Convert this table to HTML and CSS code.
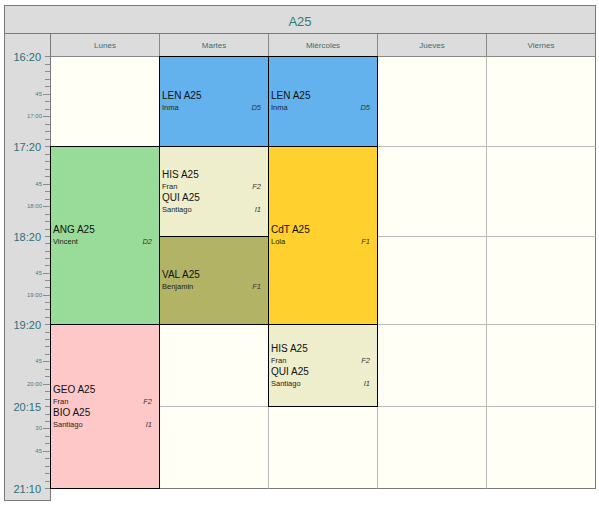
FILE: index.html
```html
<!DOCTYPE html>
<html lang="es">
<head>
<meta charset="utf-8">
<title>A25</title>
<link rel="stylesheet" href="styles.css">
</head>
<body>
<div class="cal">
  <div class="title">A25</div>
  <div class="body">
    <div class="timecol">
      <div class="mark big" style="top:22px"><span>16:20</span></div>
      <div class="mark" style="top:29.5px"></div>
      <div class="mark" style="top:37px"></div>
      <div class="mark" style="top:44.5px"></div>
      <div class="mark" style="top:52px"></div>
      <div class="mark sm" style="top:59.5px"><span>45</span></div>
      <div class="mark" style="top:67px"></div>
      <div class="mark" style="top:74.5px"></div>
      <div class="mark sm" style="top:82px"><span>17:00</span></div>
      <div class="mark" style="top:89.5px"></div>
      <div class="mark" style="top:97px"></div>
      <div class="mark" style="top:104.5px"></div>
      <div class="mark big" style="top:112px"><span>17:20</span></div>
      <div class="mark" style="top:119.5px"></div>
      <div class="mark" style="top:127px"></div>
      <div class="mark" style="top:134.5px"></div>
      <div class="mark" style="top:142px"></div>
      <div class="mark sm" style="top:149.5px"><span>45</span></div>
      <div class="mark" style="top:157px"></div>
      <div class="mark" style="top:164.5px"></div>
      <div class="mark sm" style="top:172px"><span>18:00</span></div>
      <div class="mark" style="top:179.5px"></div>
      <div class="mark" style="top:187px"></div>
      <div class="mark" style="top:194.5px"></div>
      <div class="mark big" style="top:202px"><span>18:20</span></div>
      <div class="mark" style="top:209.3px"></div>
      <div class="mark" style="top:216.7px"></div>
      <div class="mark" style="top:224px"></div>
      <div class="mark" style="top:231.3px"></div>
      <div class="mark sm" style="top:238.7px"><span>45</span></div>
      <div class="mark" style="top:246px"></div>
      <div class="mark" style="top:253.3px"></div>
      <div class="mark sm" style="top:260.7px"><span>19:00</span></div>
      <div class="mark" style="top:268px"></div>
      <div class="mark" style="top:275.3px"></div>
      <div class="mark" style="top:282.7px"></div>
      <div class="mark big" style="top:290px"><span>19:20</span></div>
      <div class="mark" style="top:297.5px"></div>
      <div class="mark" style="top:304.9px"></div>
      <div class="mark" style="top:312.4px"></div>
      <div class="mark" style="top:319.8px"></div>
      <div class="mark sm" style="top:327.3px"><span>45</span></div>
      <div class="mark" style="top:334.7px"></div>
      <div class="mark" style="top:342.2px"></div>
      <div class="mark sm" style="top:349.6px"><span>20:00</span></div>
      <div class="mark" style="top:357.1px"></div>
      <div class="mark" style="top:364.5px"></div>
      <div class="mark big" style="top:372px"><span>20:15</span></div>
      <div class="mark" style="top:379.5px"></div>
      <div class="mark" style="top:386.9px"></div>
      <div class="mark sm" style="top:394.4px"><span>30</span></div>
      <div class="mark" style="top:401.8px"></div>
      <div class="mark" style="top:409.3px"></div>
      <div class="mark sm" style="top:416.7px"><span>45</span></div>
      <div class="mark" style="top:424.2px"></div>
      <div class="mark" style="top:431.6px"></div>
      <div class="mark" style="top:439.1px"></div>
      <div class="mark" style="top:446.5px"></div>
      <div class="mark big" style="top:454px"><span>21:10</span></div>
    </div>
    <div class="main">
      <div class="days">
        <div class="day">Lunes</div>
        <div class="day">Martes</div>
        <div class="day">Miércoles</div>
        <div class="day">Jueves</div>
        <div class="day last">Viernes</div>
      </div>
      <div class="grid">
        <!-- Lunes -->
        <div class="cell"></div>
        <div class="cell ev green span2">
          <div class="subj"><div class="name">ANG A25</div><div class="meta"><span>Vincent</span><i>D2</i></div></div>
        </div>
        <div class="cell ev pink span2">
          <div class="subj"><div class="name">GEO A25</div><div class="meta"><span>Fran</span><i>F2</i></div></div>
          <div class="subj"><div class="name">BIO A25</div><div class="meta"><span>Santiago</span><i>I1</i></div></div>
        </div>
        <!-- Martes -->
        <div class="cell ev blue">
          <div class="subj"><div class="name">LEN A25</div><div class="meta"><span>Inma</span><i>D5</i></div></div>
        </div>
        <div class="cell ev cream">
          <div class="subj"><div class="name">HIS A25</div><div class="meta"><span>Fran</span><i>F2</i></div></div>
          <div class="subj"><div class="name">QUI A25</div><div class="meta"><span>Santiago</span><i>I1</i></div></div>
        </div>
        <div class="cell ev olive">
          <div class="subj"><div class="name">VAL A25</div><div class="meta"><span>Benjamin</span><i>F1</i></div></div>
        </div>
        <div class="cell"></div>
        <div class="cell bottom"></div>
        <!-- Miércoles -->
        <div class="cell ev blue">
          <div class="subj"><div class="name">LEN A25</div><div class="meta"><span>Inma</span><i>D5</i></div></div>
        </div>
        <div class="cell ev yellow span2">
          <div class="subj"><div class="name">CdT A25</div><div class="meta"><span>Lola</span><i>F1</i></div></div>
        </div>
        <div class="cell ev cream">
          <div class="subj"><div class="name">HIS A25</div><div class="meta"><span>Fran</span><i>F2</i></div></div>
          <div class="subj"><div class="name">QUI A25</div><div class="meta"><span>Santiago</span><i>I1</i></div></div>
        </div>
        <div class="cell bottom"></div>
        <!-- Jueves -->
        <div class="cell"></div>
        <div class="cell"></div>
        <div class="cell"></div>
        <div class="cell"></div>
        <div class="cell bottom"></div>
        <!-- Viernes -->
        <div class="cell edge"></div>
        <div class="cell edge"></div>
        <div class="cell edge"></div>
        <div class="cell edge"></div>
        <div class="cell edge bottom"></div>
      </div>
    </div>
  </div>
</div>
</body>
</html>
```
FILE: styles.css
```css
* { box-sizing: border-box; }

body {
  margin: 0;
  background: #ffffff;
  font-family: "Liberation Sans", Arial, sans-serif;
}

.cal {
  margin: 5px 0 0 4px;
  width: 592px;
}

.title {
  height: 29px;
  border: 1px solid #7a7a7a;
  background: #dcdcdc;
  color: #2f7a7a;
  font-size: 13px;
  line-height: 13px;
  text-align: center;
  padding-top: 9px;
}

.body {
  display: flex;
  align-items: flex-start;
}

.timecol {
  position: relative;
  width: 47px;
  height: 467px;
  border: 1px solid #7a7a7a;
  border-top: 0;
  background: #dcdcdc;
}

.mark {
  position: absolute;
  left: 0;
  right: 0;
  height: 1px;
}

.mark::after {
  content: "";
  position: absolute;
  right: 0;
  top: 0;
  width: 5px;
  height: 1px;
  background: #8c8c8c;
}

.mark span {
  position: absolute;
  right: 8px;
  top: 0;
  transform: translateY(-50%);
  line-height: 1;
  white-space: nowrap;
}

.mark.big span {
  font-size: 11px;
  color: #2f6f76;
  right: 9px;
  margin-top: 1px;
}

.mark.sm span {
  font-size: 6px;
  color: #4d7a80;
}

.mark.sm::after { width: 7px; }

.main {
  width: 545px;
}

.days {
  display: flex;
  height: 23px;
  border-bottom: 1px solid #888888;
  background: #dcdcdc;
}

.day {
  width: 109px;
  border-right: 1px solid #888888;
  text-align: center;
  font-size: 8px;
  line-height: 9px;
  padding-top: 7px;
  color: #3d6d6d;
}

.day.last { border-right-color: #7a7a7a; }

.grid {
  display: grid;
  grid-template-columns: repeat(5, 109px);
  grid-template-rows: 90px 90px 88px 82px 82px;
  grid-auto-flow: column;
}

.cell {
  border-right: 1px solid #bbbbbb;
  border-bottom: 1px solid #bbbbbb;
  background: #fffff5;
}

.cell.edge { border-right-color: #7a7a7a; }
.cell.bottom { border-bottom-color: #7a7a7a; }

.span2 { grid-row: span 2; }

.ev {
  position: relative;
  border: 1px solid #000000;
  margin: -1px 0 0 -1px;
  display: flex;
  flex-direction: column;
  justify-content: center;
  padding: 0 7px 0 2px;
}

.blue { background: #63b2ee; }
.green { background: #99dc99; }
.cream { background: #eeeecc; }
.olive { background: #b3b366; }
.yellow { background: #ffd02e; }
.pink { background: #ffc8c8; }

.name {
  font-size: 10px;
  line-height: 12px;
  color: #111111;
}

.meta {
  display: flex;
  justify-content: space-between;
  font-size: 7.5px;
  line-height: 11px;
  color: #222222;
}

.meta i {
  font-style: italic;
  color: #333333;
}
```
